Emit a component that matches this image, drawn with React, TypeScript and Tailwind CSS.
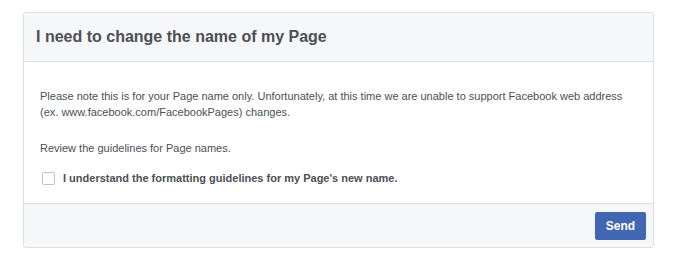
import React, { useState } from "react";

export default function App() {
  const [agreed, setAgreed] = useState(false);

  return (
    <div className="min-h-[279px] w-[681px] bg-white pt-3 pl-[23px] font-['Liberation_Sans',Arial,sans-serif]">
      <div className="w-[631px] border border-[#dddfe2] rounded-[3px] overflow-hidden">
        {/* cabecera */}
        <div className="h-[49px] bg-[#f6f7f9] border-b border-[#dddfe2] flex items-center px-3">
          <h1 className="text-[16px] font-bold text-[#4b4f56] leading-5">
            I need to change the name of my Page
          </h1>
        </div>

        {/* cuerpo */}
        <div className="bg-white pt-[26px] pb-[17px] px-4 text-[11px] text-[#4b4f56] leading-4">
          <p>
            Please note this is for your Page name only. Unfortunately, at this time we are unable to
            support Facebook web address (ex. www.facebook.com/FacebookPages) changes.
          </p>
          <p className="mt-5">Review the guidelines for Page names.</p>
          <label className="mt-[14px] flex items-center gap-2 pl-[2px] cursor-pointer">
            <input
              type="checkbox"
              checked={agreed}
              onChange={() => setAgreed(!agreed)}
              className="appearance-none w-[13px] h-[13px] border border-[#bec3c9] rounded-[2px] bg-white checked:bg-[#4267b2]"
            />
            <span className="font-bold">I understand the formatting guidelines for my Page's new name.</span>
          </label>
        </div>

        {/* pie */}
        <div className="h-[44px] bg-[#f6f7f9] border-t border-[#dddfe2] flex items-center justify-end px-[7px]">
          <button className="h-[28px] w-[51px] rounded-[2px] bg-[#4267b2] border border-[#4267b2] text-white text-[12px] font-bold">
            Send
          </button>
        </div>
      </div>
    </div>
  );
}
